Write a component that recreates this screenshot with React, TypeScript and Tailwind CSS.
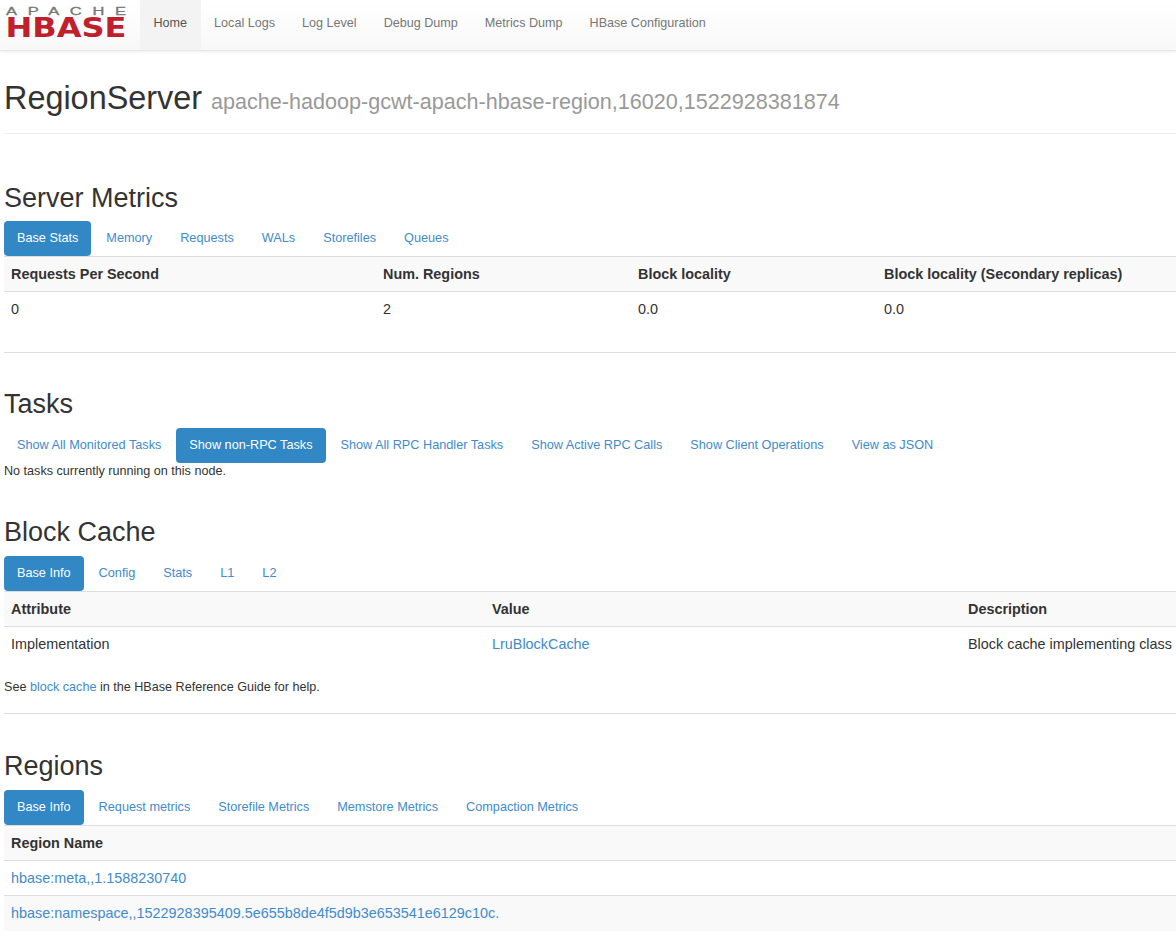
const navItems = ['Home', 'Local Logs', 'Log Level', 'Debug Dump', 'Metrics Dump', 'HBase Configuration'];

function Logo() {
  return (
    <svg width="128" height="42" viewBox="0 0 128 42" className="block">
      <text transform="scale(1.5 1)" x="4" y="15" textLength="80" lengthAdjust="spacing" fontFamily="'Liberation Sans', sans-serif" fontSize="11" fill="#777" stroke="#777" strokeWidth="0.3">APACHE</text>
      <text x="5.5" y="37" textLength="121" lengthAdjust="spacingAndGlyphs" fontFamily="'DejaVu Sans', sans-serif" fontWeight="700" fontSize="26" fill="#c0202c">HBASE</text>
    </svg>
  );
}

function Navbar() {
  return (
    <div className="flex h-[51px] border-b border-[#e7e7e7] bg-gradient-to-b from-white to-[#f8f8f8] shadow-[0_1px_3px_rgba(0,0,0,0.08)]">
      <div className="w-[140px]">
        <Logo />
      </div>
      {navItems.map((item, i) => (
        <div
          key={item}
          className={`px-[13.5px] pt-[15px] text-[12.6px] leading-[16px] ${i === 0 ? 'bg-[#f3f3f3] text-[#555]' : 'text-[#777]'}`}
        >
          {item}
        </div>
      ))}
    </div>
  );
}

function Pills({ items, active }: { items: string[]; active: string }) {
  return (
    <div className="flex gap-0.5 whitespace-nowrap">
      {items.map((item) => (
        <div
          key={item}
          className={`h-[35px] rounded px-[13px] text-[12.7px] leading-[34px] ${item === active ? 'bg-[#3287c5] text-white' : 'text-[#428bca]'}`}
        >
          {item}
        </div>
      ))}
    </div>
  );
}

function Heading({ children }: { children: React.ReactNode }) {
  return <h2 className="text-[27px] leading-[30px] text-[#333]">{children}</h2>;
}

export default function App() {
  return (
    <div className="h-[945px] w-[1176px] overflow-hidden bg-white font-['Liberation_Sans',Arial,sans-serif] text-[#333]">
      <Navbar />
      <div className="pl-1">
        <div className="mt-[27px] flex h-[56px] items-baseline gap-[9px] whitespace-nowrap border-b border-[#eee]">
          <h1 className="text-[32.4px] leading-[40px]">RegionServer</h1>
          <span className="text-[21.58px] text-[#999]">apache-hadoop-gcwt-apach-hbase-region,16020,1522928381874</span>
        </div>

        <div className="mt-[49px]">
          <Heading>Server Metrics</Heading>
        </div>
        <div className="mt-[8px]">
          <Pills items={['Base Stats', 'Memory', 'Requests', 'WALs', 'Storefiles', 'Queues']} active="Base Stats" />
        </div>
        <table className="w-[1172px] table-fixed border-collapse text-left text-[14.4px]">
          <colgroup>
            <col className="w-[372px]" />
            <col className="w-[255px]" />
            <col className="w-[246px]" />
            <col />
          </colgroup>
          <thead>
            <tr className="h-[35px] border-y border-[#ddd] bg-[#f9f9f9]">
              <th className="px-[7px] pt-[2px]">Requests Per Second</th>
              <th className="px-[7px] pt-[2px]">Num. Regions</th>
              <th className="px-[7px] pt-[2px]">Block locality</th>
              <th className="px-[7px] pt-[2px]">Block locality (Secondary replicas)</th>
            </tr>
          </thead>
          <tbody>
            <tr className="h-[35px]">
              <td className="px-[7px] pt-[2px]">0</td>
              <td className="px-[7px] pt-[2px]">2</td>
              <td className="px-[7px] pt-[2px]">0.0</td>
              <td className="px-[7px] pt-[2px]">0.0</td>
            </tr>
          </tbody>
        </table>
        <div className="mt-[25px] border-b border-[#ddd]" />

        <div className="mt-[36px]">
          <Heading>Tasks</Heading>
        </div>
        <div className="mt-[9px]">
          <Pills
            items={['Show All Monitored Tasks', 'Show non-RPC Tasks', 'Show All RPC Handler Tasks', 'Show Active RPC Calls', 'Show Client Operations', 'View as JSON']}
            active="Show non-RPC Tasks"
          />
        </div>
        <p className="text-[12.6px] leading-[16px]">No tasks currently running on this node.</p>

        <div className="mt-[38px]">
          <Heading>Block Cache</Heading>
        </div>
        <div className="mt-[9px]">
          <Pills items={['Base Info', 'Config', 'Stats', 'L1', 'L2']} active="Base Info" />
        </div>
        <table className="w-[1172px] table-fixed border-collapse text-left text-[14.4px]">
          <colgroup>
            <col className="w-[481px]" />
            <col className="w-[476px]" />
            <col />
          </colgroup>
          <thead>
            <tr className="h-[35px] border-y border-[#ddd] bg-[#f9f9f9]">
              <th className="px-[7px] pt-[2px]">Attribute</th>
              <th className="px-[7px] pt-[2px]">Value</th>
              <th className="px-[7px] pt-[2px]">Description</th>
            </tr>
          </thead>
          <tbody>
            <tr className="h-[35px]">
              <td className="px-[7px] pt-[2px]">Implementation</td>
              <td className="px-[7px] pt-[2px] text-[#428bca]">LruBlockCache</td>
              <td className="whitespace-nowrap px-[7px] pt-[2px]">Block cache implementing class</td>
            </tr>
          </tbody>
        </table>
        <p className="mt-[18px] text-[12.6px] leading-[16px]">
          See <span className="text-[#428bca]">block cache</span> in the HBase Reference Guide for help.
        </p>
        <div className="mt-[18px] border-b border-[#ddd]" />

        <div className="mt-[37px]">
          <Heading>Regions</Heading>
        </div>
        <div className="mt-[9px]">
          <Pills items={['Base Info', 'Request metrics', 'Storefile Metrics', 'Memstore Metrics', 'Compaction Metrics']} active="Base Info" />
        </div>
        <table className="w-[1172px] border-collapse text-left text-[14.4px]">
          <thead>
            <tr className="h-[35px] border-y border-[#ddd] bg-[#f9f9f9]">
              <th className="px-[7px] pt-[2px]">Region Name</th>
            </tr>
          </thead>
          <tbody>
            <tr className="h-[35px]">
              <td className="px-[7px] pt-[2px] text-[#428bca]">hbase:meta,,1.1588230740</td>
            </tr>
            <tr className="h-[35px] border-t border-[#ddd] bg-[#f9f9f9]">
              <td className="px-[7px] pt-[2px] text-[#428bca]">hbase:namespace,,1522928395409.5e655b8de4f5d9b3e653541e6129c10c.</td>
            </tr>
          </tbody>
        </table>
      </div>
    </div>
  );
}
